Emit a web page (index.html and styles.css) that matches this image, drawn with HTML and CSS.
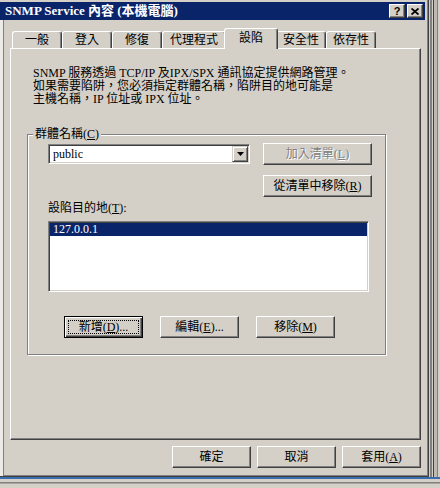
FILE: index.html
```html
<!DOCTYPE html>
<html lang="zh-TW">
<head>
<meta charset="utf-8">
<title>SNMP Service 內容</title>
<link rel="stylesheet" href="styles.css">
</head>
<body>
<div class="screen">
  <div class="window-row">
    <div class="dialog">
      <div class="titlebar">
        <span class="title">SNMP Service 內容 (本機電腦)</span>
        <div class="caption-btns">
          <span class="cap-btn help">?</span>
          <span class="cap-btn close"><svg width="8" height="7" viewBox="0 0 8 7"><path d="M0.5 0.5 L7.5 6.5 M7.5 0.5 L0.5 6.5" stroke="#000" stroke-width="1.8" fill="none"/></svg></span>
        </div>
      </div>
      <div class="dialog-body">
        <div class="left-strip"></div>
        <div class="client">
          <div class="tabs">
            <div class="tab">一般</div>
            <div class="tab">登入</div>
            <div class="tab">修復</div>
            <div class="tab wide">代理程式</div>
            <div class="tab sel">設陷</div>
            <div class="tab">安全性</div>
            <div class="tab">依存性</div>
          </div>
          <div class="panel">
            <p class="desc">SNMP 服務透過 TCP/IP 及IPX/SPX 通訊協定提供網路管理。<br>如果需要陷阱，您必須指定群體名稱，陷阱目的地可能是<br>主機名稱，IP 位址或 IPX 位址。</p>
            <div class="group">
              <div class="legend">群體名稱(<u>C</u>)</div>
              <div class="row-top">
                <div class="combo">
                  <span class="combo-text">public</span>
                  <span class="combo-arrow"><svg width="7" height="4" viewBox="0 0 7 4"><polygon points="0,0 7,0 3.5,4" fill="#000"/></svg></span>
                </div>
                <div class="btn-col">
                  <div class="btn disabled">加入清單(<u>L</u>)</div>
                  <div class="btn">從清單中移除(<u>R</u>)</div>
                </div>
              </div>
              <div class="label">設陷目的地(<u>T</u>):</div>
              <div class="listbox">
                <div class="item sel">127.0.0.1</div>
              </div>
              <div class="btn-row">
                <div class="btn default"><span class="focus">新增(<u>D</u>)...</span></div>
                <div class="btn">編輯(<u>E</u>)...</div>
                <div class="btn">移除(<u>M</u>)</div>
              </div>
            </div>
          </div>
          <div class="footer">
            <div class="btn">確定</div>
            <div class="btn">取消</div>
            <div class="btn">套用(<u>A</u>)</div>
          </div>
        </div>
      </div>
    </div>
    <div class="behind-right"></div>
  </div>
  <div class="behind-bottom"></div>
</div>
</body>
</html>
```
FILE: styles.css
```css
html, body {
  margin: 0;
  padding: 0;
}
body {
  background: #d4d0c8;
  font-family: "Liberation Serif", "Noto Sans CJK TC", serif;
  font-size: 12px;
  color: #000;
}
.screen {
  width: 440px;
  height: 488px;
  overflow: hidden;
  display: flex;
  flex-direction: column;
}
.window-row {
  display: flex;
  height: 477px;
}
.dialog {
  width: 429px;
  height: 477px;
  box-sizing: border-box;
  padding: 2px 3px 0 0;
  border-right: 1px solid #404040;
  border-bottom: 1px solid #404040;
  box-shadow: inset -1px -1px #808080;
  display: flex;
  flex-direction: column;
}
.titlebar {
  height: 18px;
  flex: none;
  background: #0a246a;
  display: flex;
  align-items: center;
  justify-content: space-between;
  padding: 0 2px 0 5px;
}
.title {
  color: #fff;
  font-weight: bold;
  font-size: 13px;
  white-space: nowrap;
  line-height: 14px;
}
.caption-btns {
  display: flex;
  gap: 2px;
}
.cap-btn {
  width: 16px;
  height: 14px;
  box-sizing: border-box;
  background: #d4d0c8;
  border-top: 1px solid #fff;
  border-left: 1px solid #fff;
  border-right: 1px solid #404040;
  border-bottom: 1px solid #404040;
  box-shadow: inset -1px -1px #808080;
  display: flex;
  align-items: center;
  justify-content: center;
  font: bold 11px "Liberation Sans", sans-serif;
  line-height: 11px;
}
.dialog-body {
  flex: 1;
  display: flex;
}
.left-strip {
  width: 3px;
  background: #ecebe8;
}
.client {
  flex: 1;
  display: flex;
  flex-direction: column;
  border-left: 1px solid #808080;
  padding: 8px 4px 0 6px;
}
.tabs {
  display: flex;
  align-items: flex-end;
  height: 20px;
  padding-left: 2px;
}
.tab {
  width: 50px;
  height: 17px;
  box-sizing: border-box;
  border-top: 1px solid #fff;
  border-left: 1px solid #fff;
  border-right: 1px solid #404040;
  box-shadow: inset -1px 0 #808080;
  border-radius: 3px 3px 0 0;
  text-align: center;
  line-height: 14px;
  padding-top: 1px;
  background: #d4d0c8;
}
.tab.wide {
  width: 64px;
}
.tab.sel {
  width: 54px;
  height: 21px;
  margin: 0 -2px -1px;
  padding-top: 2px;
  position: relative;
  z-index: 1;
}
.panel {
  height: 392px;
  box-sizing: border-box;
  border-top: 1px solid #fff;
  border-left: 1px solid #fff;
  border-right: 1px solid #404040;
  border-bottom: 1px solid #404040;
  box-shadow: inset -1px -1px #808080;
  display: flex;
  flex-direction: column;
}
.desc {
  margin: 18px 0 0 22px;
  line-height: 13px;
  white-space: nowrap;
}
.group {
  margin: 28px 0 0 16px;
  width: 359px;
  height: 221px;
  box-sizing: border-box;
  border: 1px solid #808080;
  box-shadow: inset 1px 1px #fff, 1px 1px #fff;
  padding: 0 13px 0 20px;
  display: flex;
  flex-direction: column;
}
.legend {
  align-self: flex-start;
  margin: -7px 0 0 -15px;
  padding: 0 2px;
  background: #d4d0c8;
  line-height: 12px;
}
.row-top {
  display: flex;
  justify-content: space-between;
  margin-top: 3px;
}
.combo {
  width: 202px;
  height: 20px;
  margin-top: 1px;
  box-sizing: border-box;
  border-top: 1px solid #808080;
  border-left: 1px solid #808080;
  border-right: 1px solid #fff;
  border-bottom: 1px solid #fff;
  box-shadow: inset 1px 1px #404040, inset -1px -1px #d4d0c8;
  background: #fff;
  display: flex;
  align-items: center;
  padding: 1px;
}
.combo-text {
  flex: 1;
  padding-left: 3px;
  line-height: 12px;
}
.combo-arrow {
  width: 16px;
  height: 16px;
  box-sizing: border-box;
  background: #d4d0c8;
  border-top: 1px solid #d4d0c8;
  border-left: 1px solid #d4d0c8;
  border-right: 1px solid #404040;
  border-bottom: 1px solid #404040;
  box-shadow: inset 1px 1px #fff, inset -1px -1px #808080;
  display: flex;
  align-items: center;
  justify-content: center;
}
.btn-col {
  display: flex;
  flex-direction: column;
  gap: 10px;
  width: 109px;
}
.btn {
  width: 79px;
  height: 22px;
  box-sizing: border-box;
  background: #d4d0c8;
  border-top: 1px solid #fff;
  border-left: 1px solid #fff;
  border-right: 1px solid #404040;
  border-bottom: 1px solid #404040;
  box-shadow: inset -1px -1px #808080;
  display: flex;
  align-items: center;
  justify-content: center;
  line-height: 12px;
  white-space: nowrap;
}
.btn-col .btn {
  width: 109px;
}
.btn.disabled {
  color: #808080;
  text-shadow: 1px 1px 0 #fff;
}
.btn.default {
  border: 1px solid #000;
  box-shadow: inset 1px 1px #fff, inset -1px -1px #404040, inset -2px -2px #808080;
}
.focus {
  width: 71px;
  height: 14px;
  box-sizing: border-box;
  border: 1px dotted #000;
  display: flex;
  align-items: center;
  justify-content: center;
}
.label {
  margin-top: 5px;
  line-height: 12px;
}
.listbox {
  margin-top: 7px;
  width: 321px;
  height: 71px;
  box-sizing: border-box;
  border-top: 1px solid #808080;
  border-left: 1px solid #808080;
  border-right: 1px solid #fff;
  border-bottom: 1px solid #fff;
  box-shadow: inset 1px 1px #404040, inset -1px -1px #d4d0c8;
  background: #fff;
  padding: 1px;
}
.item {
  height: 13px;
  line-height: 13px;
  padding-left: 3px;
}
.item.sel {
  background: #0a246a;
  color: #fff;
}
.btn-row {
  display: flex;
  gap: 17px;
  margin: 24px 0 0 16px;
}
.footer {
  display: flex;
  justify-content: flex-end;
  gap: 6px;
  margin-top: 6px;
}
.behind-right {
  flex: 1;
  background: linear-gradient(to right, #d4d0c8 0 1px, #808080 1px 3px, #d4d0c8 3px 4px, #404040 4px 5px, #bdbab3 5px 8px, #808080 8px 9px, #d4d0c8 9px 11px);
}
.behind-bottom {
  flex: 1;
  background: linear-gradient(to bottom, #3a6db0 0 2px, #d4d0c8 2px 5px, #808080 5px 6px, #a9a6a0 6px 7px, #d4d0c8 7px);
}
```
